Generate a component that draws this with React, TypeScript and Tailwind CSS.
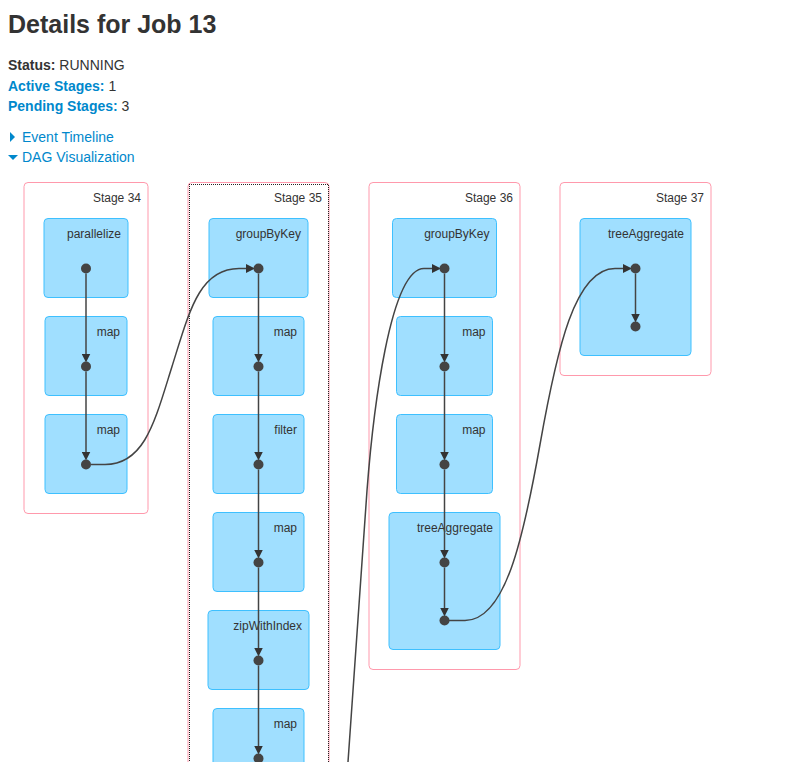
import React from "react";

type Op = { name: string; left: number; right: number; nodes?: number };
type Stage = {
  id: number;
  left: number;
  right: number;
  nodeX: number;
  ops: Op[];
  focused?: boolean;
};

const stages: Stage[] = [
  {
    id: 34,
    left: 24,
    right: 148,
    nodeX: 86,
    ops: [
      { name: "parallelize", left: 44, right: 128 },
      { name: "map", left: 45, right: 127 },
      { name: "map", left: 45, right: 127 },
    ],
  },
  {
    id: 35,
    left: 188,
    right: 329,
    nodeX: 258.5,
    focused: true,
    ops: [
      { name: "groupByKey", left: 209, right: 308 },
      { name: "map", left: 213, right: 304 },
      { name: "filter", left: 213, right: 304 },
      { name: "map", left: 213, right: 304 },
      { name: "zipWithIndex", left: 208, right: 309 },
      { name: "map", left: 213, right: 304 },
    ],
  },
  {
    id: 36,
    left: 369,
    right: 520,
    nodeX: 444.5,
    ops: [
      { name: "groupByKey", left: 392.5, right: 496.5 },
      { name: "map", left: 396.5, right: 492.5 },
      { name: "map", left: 396.5, right: 492.5 },
      { name: "treeAggregate", left: 389, right: 500, nodes: 2 },
    ],
  },
  {
    id: 37,
    left: 560,
    right: 711,
    nodeX: 635.5,
    ops: [{ name: "treeAggregate", left: 580, right: 691, nodes: 2 }],
  },
];

const STAGE_TOP = 12;
const OP_TOP = 48;
const OP_PITCH = 98;
const NODE_PITCH = 58;

const opTop = (i: number) => OP_TOP + i * OP_PITCH;
const opHeight = (op: Op) => 79 + ((op.nodes ?? 1) - 1) * NODE_PITCH;

const nodeYs = (stage: Stage) =>
  stage.ops.flatMap((op, i) =>
    Array.from({ length: op.nodes ?? 1 }, (_, n) => opTop(i) + 50 + n * NODE_PITCH)
  );

const crossEdges = [
  "M91 294 H105 C145 294 155 250 172 196 S199 98 239 98 H247",
  "M346 620 L367 320 C373 242 390 98 424 98 H433",
  "M449 450 H465 C505 450 523 370 540 274 S575 98 615 98 H624",
];

function StageBox({ stage }: { stage: Stage }) {
  const last = stage.ops.length - 1;
  const height = opTop(last) + opHeight(stage.ops[last]) + 20 - STAGE_TOP;
  return (
    <a href={`#stage-${stage.id}`}>
      <rect
        x={stage.left}
        y={STAGE_TOP}
        width={stage.right - stage.left}
        height={height}
        rx={4}
        fill="#fff"
        stroke="#ff99ac"
      />
      <text x={stage.right - 7} y={31} textAnchor="end">
        Stage {stage.id}
      </text>
      {stage.ops.map((op, i) => (
        <g key={i}>
          <rect
            x={op.left}
            y={opTop(i)}
            width={op.right - op.left}
            height={opHeight(op)}
            rx={4}
            fill="#a0dfff"
            stroke="#3ec0ff"
          />
          <text x={op.right - 7} y={opTop(i) + 19} textAnchor="end">
            {op.name}
          </text>
        </g>
      ))}
      {stage.focused && (
        <rect
          x={stage.left + 1.5}
          y={STAGE_TOP + 2}
          width={stage.right - stage.left - 2}
          height={height}
          fill="none"
          stroke="#222"
          strokeDasharray="1 1"
          strokeDashoffset={0.5}
          shapeRendering="crispEdges"
        />
      )}
    </a>
  );
}

function StageEdges({ stage }: { stage: Stage }) {
  const ys = nodeYs(stage);
  return (
    <g>
      {ys.slice(1).map((y, i) => (
        <path
          key={y}
          d={`M${stage.nodeX} ${ys[i] + 5} V${y - 12}`}
          fill="none"
          stroke="#444"
          strokeWidth={1.5}
          markerEnd="url(#arrow)"
        />
      ))}
      {ys.map((y) => (
        <circle key={y} cx={stage.nodeX} cy={y} r={5} fill="#444" />
      ))}
    </g>
  );
}

function Dag() {
  return (
    <svg
      width={760}
      height={620}
      role="img"
      aria-label="DAG Visualization"
      className="block shrink-0 fill-[#333] text-[12px]"
    >
      <defs>
        <marker
          id="arrow"
          viewBox="0 0 9 9"
          refX={1}
          refY={4.5}
          markerWidth={9}
          markerHeight={9}
          markerUnits="userSpaceOnUse"
          orient="auto"
        >
          <path d="M0 0 L9 4.5 L0 9 Z" fill="#333" />
        </marker>
      </defs>
      <g transform="translate(0 .5)">
        {stages.map((s) => (
          <StageBox key={s.id} stage={s} />
        ))}
        {crossEdges.map((d) => (
          <path
            key={d}
            d={d}
            fill="none"
            stroke="#444"
            strokeWidth={1.5}
            markerEnd="url(#arrow)"
          />
        ))}
        {stages.map((s) => (
          <StageEdges key={s.id} stage={s} />
        ))}
      </g>
    </svg>
  );
}

export default function App() {
  return (
    <main className="flex h-screen flex-col overflow-hidden bg-white font-['Liberation_Sans',Arial,sans-serif] text-[14px] leading-5 text-[#333]">
      <header className="px-2 pt-1">
        <h3 className="text-[25px] leading-10 font-bold">Details for Job 13</h3>
        <ul className="mt-[11px]">
          <li>
            <strong>Status:</strong> RUNNING
          </li>
          <li className="mt-px">
            <a href="#active" className="font-bold text-[#08c]">
              Active Stages:
            </a>{" "}
            1
          </li>
          <li>
            <a href="#pending" className="font-bold text-[#08c]">
              Pending Stages:
            </a>{" "}
            3
          </li>
        </ul>
        <nav className="mt-[11px] flex flex-col items-start text-[#08c]">
          <a href="#timeline" className="flex items-center gap-1">
            <svg width="10" height="10" viewBox="0 0 10 10" aria-hidden="true">
              <path d="M2 0 L7 5 L2 10 Z" fill="currentColor" />
            </svg>
            Event Timeline
          </a>
          <a href="#dag" className="flex items-center gap-1">
            <svg width="10" height="10" viewBox="0 0 10 10" aria-hidden="true">
              <path d="M0 3 H10 L5 8 Z" fill="currentColor" />
            </svg>
            DAG Visualization
          </a>
        </nav>
      </header>
      <section className="mt-[3px] min-h-0 flex-1 overflow-hidden">
        <Dag />
      </section>
    </main>
  );
}
